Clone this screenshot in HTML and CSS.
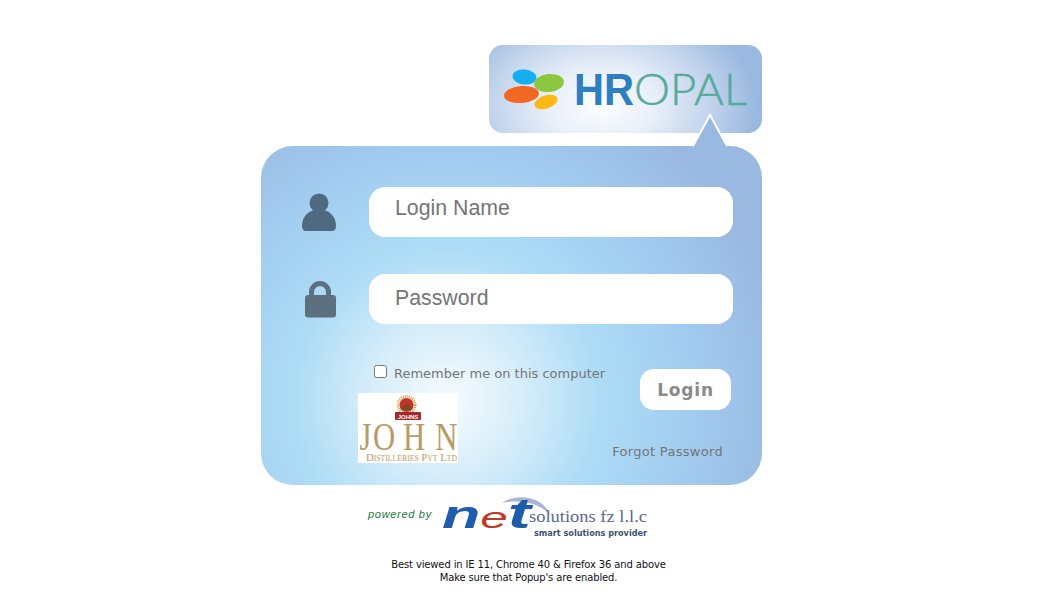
FILE: index.html
```html
<!DOCTYPE html>
<html lang="en">
<head>
<meta charset="utf-8">
<title>HROPAL Login</title>
<link rel="stylesheet" href="styles.css">
</head>
<body>
<main class="page">
  <div class="brand-row">
    <div class="brand">
      <svg class="brand-logo" viewBox="0 0 273 88" width="273" height="88" aria-label="HROPAL">
        <ellipse cx="35.500" cy="32" rx="12" ry="7.500" fill="#15aef0" transform="rotate(6 35.500 32)"/>
        <ellipse cx="60" cy="38" rx="15" ry="9" fill="#8dc63f" transform="rotate(-6 60 38)"/>
        <ellipse cx="32.500" cy="49.500" rx="17.500" ry="8.500" fill="#f26722" transform="rotate(-5 32.500 49.500)"/>
        <ellipse cx="57" cy="57" rx="12" ry="6.500" fill="#fdb913" transform="rotate(-18 57 57)"/>
        <text class="logo-hr" x="85" y="60" textLength="60" lengthAdjust="spacingAndGlyphs">HR</text>
        <text class="logo-opal" x="145" y="60" textLength="113" lengthAdjust="spacingAndGlyphs">OPAL</text>
      </svg>
    </div>
  </div>
  <form class="panel">
    <svg class="pointer" viewBox="0 0 40 34" width="40" height="34" aria-hidden="true">
      <path d="M20 2 L37 33 L3 33 Z" fill="#9ab9e0"/>
      <path d="M3 33 L20 2 L37 33" fill="none" stroke="#fff" stroke-width="2"/>
    </svg>
    <div class="field">
      <span class="field-icon">
        <svg viewBox="0 0 34 38" width="34" height="38" aria-hidden="true">
          <circle cx="17" cy="10" r="9.500" fill="#4f6a80"/>
          <path d="M0 33 C0 22 8 16.500 17 16.500 C26 16.500 34 22 34 33 Q34 38 30 38 L4 38 Q0 38 0 33 Z" fill="#4f6a80"/>
        </svg>
      </span>
      <input class="text-input input-name" type="text" placeholder="Login Name">
    </div>
    <div class="field field-second">
      <span class="field-icon">
        <svg viewBox="0 0 34 38" width="34" height="38" aria-hidden="true">
          <path d="M9.500 18 V12 A8.500 8.500 0 0 1 26.500 12 V18" fill="none" stroke="#5d7080" stroke-width="5"/>
          <rect x="3" y="15" width="31" height="22.500" rx="3" fill="#5d7080"/>
        </svg>
      </span>
      <input class="text-input input-pass" type="password" placeholder="Password">
    </div>
    <div class="lower">
      <div class="lower-left">
        <label class="remember"><input class="check" type="checkbox"><span>Remember me on this computer</span></label>
        <svg class="john" viewBox="0 0 100 70" width="100" height="70" aria-label="John Distilleries Pvt Ltd">
          <rect width="100" height="70" fill="#fff"/>
          <circle cx="48.500" cy="12" r="8.500" fill="none" stroke="#d9a24a" stroke-width="3" stroke-dasharray="1 1"/>
          <circle cx="48.500" cy="12" r="7" fill="#c0342b"/>
          <path d="M43 17 Q48.500 5 54 17 Z" fill="#7c4a22"/>
          <rect x="37" y="19" width="26" height="8" rx="1" fill="#a6272d"/>
          <text class="john-small" x="50" y="25.500" text-anchor="middle">JOHNS</text>
          <text class="john-name" x="2 20 60 103" y="57" transform="scale(.75 1)">JOHN</text>
          <text class="john-sub" x="8" y="68" textLength="91" lengthAdjust="spacingAndGlyphs">Distilleries Pvt Ltd</text>
        </svg>
      </div>
      <div class="lower-right">
        <button class="login" type="button">Login</button>
        <a class="forgot" href="#">Forgot Password</a>
      </div>
    </div>
  </form>
  <div class="powered">
    <span class="powered-text">powered by</span>
    <svg class="net" viewBox="0 0 210 44" width="210" height="44" aria-label="net solutions fz l.l.c">
      <path d="M60 8 C72 -1 100 -1 108 20 C98 8 78 4 60 8 Z" fill="#a9b3d6"/>
      <text class="net-word" x="0" y="33" textLength="89" lengthAdjust="spacingAndGlyphs"><tspan class="net-n">n</tspan><tspan class="net-e">e</tspan><tspan class="net-t">t</tspan></text>
      <text class="net-sol" x="87" y="27" textLength="118" lengthAdjust="spacingAndGlyphs">solutions fz l.l.c</text>
      <text class="net-tag" x="92" y="41" textLength="113" lengthAdjust="spacingAndGlyphs">smart solutions provider</text>
    </svg>
  </div>
  <footer class="note">
    <p>Best viewed in IE 11, Chrome 40 &amp; Firefox 36 and above</p>
    <p>Make sure that Popup's are enabled.</p>
  </footer>
</main>
</body>
</html>
```
FILE: styles.css
```css
html, body {
  margin: 0;
  padding: 0;
  background: #fff;
}

.page {
  width: 1048px;
  height: 590px;
  padding-top: 45px;
  box-sizing: border-box;
  overflow: hidden;
  font-family: "DejaVu Sans", Verdana, sans-serif;
}

.brand-row {
  width: 501px;
  margin-left: 261px;
  display: flex;
  justify-content: flex-end;
}

.brand {
  width: 273px;
  height: 88px;
  border-radius: 14px;
  background: radial-gradient(ellipse 155px 105px at 41% 68%, #fdfeff 0%, #e8eff9 35%, #c3d4ec 70%, #9ab9e0 100%);
}

.brand-logo {
  display: block;
}

.logo-hr {
  font-family: "Liberation Sans", Arial, sans-serif;
  font-size: 44px;
  font-weight: 700;
  fill: #2e7fc1;
}

.logo-opal {
  font-family: "Lato", "Liberation Sans", sans-serif;
  font-size: 44px;
  font-weight: 300;
  fill: #55aa9b;
  stroke: #55aa9b;
  stroke-width: 0.500px;
}

.panel {
  position: relative;
  width: 501px;
  height: 339px;
  margin: 13px 0 0 261px;
  padding-top: 41px;
  box-sizing: border-box;
  border-radius: 32px;
  background: radial-gradient(ellipse 400px 400px at 37% 75%, #f5fbfe 0%, #d8eefa 18%, #aedcf6 38%, #a2cdf0 60%, #9ab9e0 85%);
}

.pointer {
  position: absolute;
  left: 429px;
  top: -33px;
}

.field {
  display: flex;
  align-items: center;
  height: 50px;
}

.field-second {
  margin-top: 37px;
}

.field-icon {
  display: flex;
  width: 108px;
  padding-left: 41px;
  box-sizing: border-box;
}

.text-input {
  width: 364px;
  height: 50px;
  padding: 0 26px;
  box-sizing: border-box;
  border: 0;
  border-radius: 16px;
  background: #fff;
  font-family: "Liberation Sans", Arial, sans-serif;
  font-size: 21.300px;
  color: #555;
  outline: none;
}

.input-name {
  padding-bottom: 8px;
}

.input-pass {
  padding-bottom: 2px;
}

.text-input::placeholder {
  color: #757575;
  opacity: 1;
}

.lower {
  display: flex;
  justify-content: space-between;
  margin: 40px 31px 0 97px;
}

.lower-left {
  display: flex;
  flex-direction: column;
}

.remember {
  display: flex;
  align-items: center;
  height: 18px;
  margin-left: 16px;
  font-size: 13px;
  color: #757575;
}

.check {
  width: 13px;
  height: 13px;
  margin: 0 7px 0 0;
  position: relative;
  top: -2px;
}

.john {
  display: block;
  margin-top: 11px;
}

.john-small {
  font-family: "Liberation Sans", Arial, sans-serif;
  font-size: 6px;
  font-weight: 700;
  fill: #fff;
}

.john-name {
  font-family: "Liberation Serif", serif;
  font-size: 41px;
  fill: #b89b63;
}

.john-sub {
  font-family: "Liberation Serif", serif;
  font-size: 11px;
  font-variant: small-caps;
  fill: #b89b63;
}

.lower-right {
  display: flex;
  flex-direction: column;
  align-items: flex-end;
}

.login {
  width: 91px;
  height: 41px;
  margin-top: 5px;
  padding: 0;
  border: 0;
  border-radius: 14px;
  background: #fff;
  font-family: "DejaVu Sans", Verdana, sans-serif;
  font-size: 17px;
  font-weight: 700;
  letter-spacing: 0.800px;
  color: #8a8a8a;
}

.forgot {
  margin: 34px 8px 0 0;
  font-size: 13px;
  letter-spacing: 0.300px;
  color: #757575;
  text-decoration: none;
}

.powered {
  display: flex;
  align-items: flex-start;
  width: 501px;
  margin: 10px 0 0 261px;
}

.powered-text {
  margin: 13px 0 0 107px;
  width: 75px;
  font-family: "Liberation Sans", Arial, sans-serif;
  font-size: 11px;
  font-style: italic;
  letter-spacing: 0.700px;
  color: #1a7a3a;
}

.net {
  display: block;
  margin-left: -1px;
}

.net-word {
  font-family: "Liberation Sans", Arial, sans-serif;
  font-style: italic;
  font-weight: 700;
}

.net-n {
  font-size: 38px;
  fill: #1f5cab;
}

.net-e {
  font-size: 30px;
  font-weight: 400;
  fill: #c0392b;
}

.net-t {
  font-size: 42px;
  fill: #1f5cab;
}

.net-sol {
  font-family: "Liberation Serif", serif;
  font-size: 17px;
  fill: #5a6a8a;
}

.net-tag {
  font-family: "DejaVu Sans", sans-serif;
  font-size: 8px;
  font-weight: 700;
  fill: #3f5272;
}

.note {
  width: 635px;
  margin: 19px 0 0 211px;
  font-size: 10px;
  line-height: 13px;
  letter-spacing: -0.140px;
  color: #111;
  text-align: center;
}

.note p {
  margin: 0;
}
```
